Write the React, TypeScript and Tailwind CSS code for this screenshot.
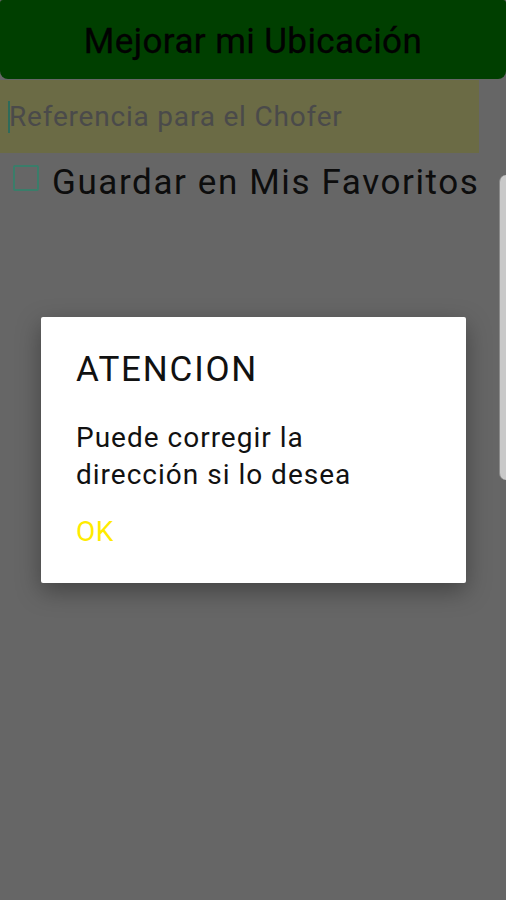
import React from "react";

export default function App() {
  return (
    <div
      className="relative w-[506px] h-[900px] bg-[#666666] overflow-hidden"
      style={{ fontFamily: "Roboto, 'Noto Sans', sans-serif" }}
    >
      <div className="h-[79px] w-full bg-[#003f00] rounded-b-[8px] rounded-t-[3px] flex items-center justify-center">
        <span className="text-[35px] leading-[40px] tracking-[0.4px] text-[#020202] mt-[4px] [-webkit-text-stroke:0.3px_#020202]">Mejorar mi Ubicación</span>
      </div>
      <div className="mt-[1px] h-[73px] w-[479px] bg-[#6b6b45] flex items-center pl-[8px]">
        <div className="w-[2px] h-[32px] bg-[#2f6b5a]" />
        <span className="text-[28px] leading-[32px] tracking-[0.8px] text-[#4a4a4a] -ml-[1px]">Referencia para el Chofer</span>
      </div>
      <div className="flex items-center mt-[11px] pl-[13px] h-[34px]">
        <div className="w-[26px] h-[26px] border-[2px] border-[#3a7d6a] rounded-[2px] -mt-[6px]" />
        <span className="ml-[13px] mt-[4px] text-[35px] leading-[40px] tracking-[1.6px] text-[#0d0d0d]">Guardar en Mis Favoritos</span>
      </div>

      <div className="absolute right-0 top-[175px] h-[305px] w-[7px] bg-[#c9c9c9] rounded-l-[14px] border-l border-[#8a8a8a]" />

      <div className="absolute left-[41px] top-[317px] w-[425px] h-[266px] bg-white rounded-[2px] shadow-[0_8px_24px_rgba(0,0,0,0.35)] px-[35px] pt-[33px]">
        <div className="text-[35px] leading-[40px] tracking-[1.8px] text-[#111111]">ATENCION</div>
        <div className="mt-[29px] text-[28px] leading-[37px] tracking-[1px] text-[#111111]">
          Puede corregir la
          <br />
          dirección si lo desea
        </div>
        <div className="mt-[23px] text-[28px] leading-[32px] tracking-[0.5px] text-[#ffeb00]">OK</div>
      </div>
    </div>
  );
}
